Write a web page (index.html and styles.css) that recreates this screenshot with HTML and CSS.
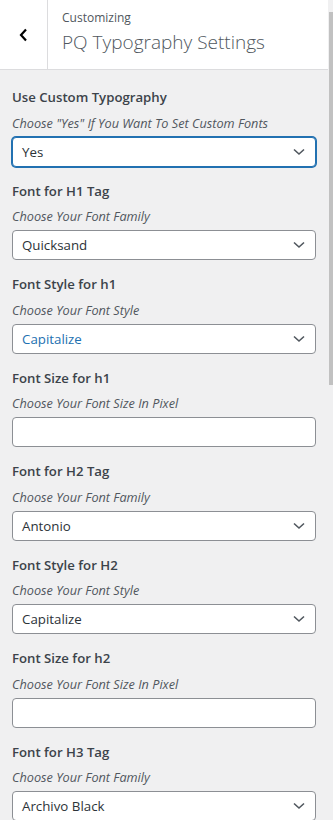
FILE: index.html
```html
<!DOCTYPE html>
<html lang="en">
    <head>
        <meta charset="UTF-8">
        <title>PQ Typography Settings</title>
        <link rel="stylesheet" href="styles.css">
    </head>
    <body>
    <div class="frame">
        <div class="pane">
            <div class="pane-head">
                <div class="back">
                    <svg width="10" height="14" viewBox="0 0 10 14"><polyline points="7,1.5 2,7 7,12.5" fill="none" stroke="#000" stroke-width="2.2"/></svg>
                </div>
                <div class="head-text">
                    <div class="head-sub">Customizing</div>
                    <div class="head-title">PQ Typography Settings</div>
                </div>
            </div>
            <div class="controls">
                <div class="control">
                    <span class="control-title">Use Custom Typography</span>
                    <span class="control-desc">Choose "Yes" If You Want To Set Custom Fonts</span>
                    <div class="select focus"><span>Yes</span><svg class="chev" width="12" height="8" viewBox="0 0 12 8"><polyline points="1,1.5 6,6 11,1.5" fill="none" stroke="#50575e" stroke-width="1.6"/></svg></div>
                </div>
                <div class="control">
                    <span class="control-title">Font for H1 Tag</span>
                    <span class="control-desc">Choose Your Font Family</span>
                    <div class="select"><span>Quicksand</span><svg class="chev" width="12" height="8" viewBox="0 0 12 8"><polyline points="1,1.5 6,6 11,1.5" fill="none" stroke="#50575e" stroke-width="1.6"/></svg></div>
                </div>
                <div class="control">
                    <span class="control-title">Font Style for h1</span>
                    <span class="control-desc">Choose Your Font Style</span>
                    <div class="select hover"><span>Capitalize</span><svg class="chev" width="12" height="8" viewBox="0 0 12 8"><polyline points="1,1.5 6,6 11,1.5" fill="none" stroke="#50575e" stroke-width="1.6"/></svg></div>
                </div>
                <div class="control">
                    <span class="control-title">Font Size for h1</span>
                    <span class="control-desc">Choose Your Font Size In Pixel</span>
                    <div class="input"></div>
                </div>
                <div class="control">
                    <span class="control-title">Font for H2 Tag</span>
                    <span class="control-desc">Choose Your Font Family</span>
                    <div class="select"><span>Antonio</span><svg class="chev" width="12" height="8" viewBox="0 0 12 8"><polyline points="1,1.5 6,6 11,1.5" fill="none" stroke="#50575e" stroke-width="1.6"/></svg></div>
                </div>
                <div class="control">
                    <span class="control-title">Font Style for H2</span>
                    <span class="control-desc">Choose Your Font Style</span>
                    <div class="select"><span>Capitalize</span><svg class="chev" width="12" height="8" viewBox="0 0 12 8"><polyline points="1,1.5 6,6 11,1.5" fill="none" stroke="#50575e" stroke-width="1.6"/></svg></div>
                </div>
                <div class="control">
                    <span class="control-title">Font Size for h2</span>
                    <span class="control-desc">Choose Your Font Size In Pixel</span>
                    <div class="input"></div>
                </div>
                <div class="control">
                    <span class="control-title">Font for H3 Tag</span>
                    <span class="control-desc">Choose Your Font Family</span>
                    <div class="select"><span>Archivo Black</span><svg class="chev" width="12" height="8" viewBox="0 0 12 8"><polyline points="1,1.5 6,6 11,1.5" fill="none" stroke="#50575e" stroke-width="1.6"/></svg></div>
                </div>
            </div>
        </div>
        <div class="scrollbar">
            <div class="thumb"></div>
        </div>
    </div>
    </body>
</html>
```

FILE: styles.css
```css
body {
    margin: 0;
    overflow: hidden;
    background-color: #f0f0f1;
    font-family: "Open Sans", "Noto Sans", sans-serif;
    color: #3c434a;
}
.frame {
    display: flex;
    height: 820px;
    overflow: hidden;
}
.pane {
    flex: 1;
    min-width: 0;
}
.pane-head {
    display: flex;
    height: 69px;
    background-color: #fff;
    border-bottom: 1px solid #dcdcde;
}
.back {
    width: 47px;
    border-right: 1px solid #dcdcde;
    display: flex;
    justify-content: center;
    align-items: center;
}
.head-text {
    padding: 9px 0 0 14px;
    color: #50575e;
}
.head-sub {
    font-size: 12px;
    line-height: 18px;
}
.head-title {
    font-size: 19px;
    font-weight: 300;
    line-height: 30px;
}

.controls {
    padding: 15px 12px 0 12px;
}
.control {
    margin-bottom: 12px;
}
.control-title {
    display: block;
    font-size: 13.2px;
    font-weight: 600;
    line-height: 24.5px;
    margin-bottom: 4px;
    color: #3c434a;
}
.control-desc {
    display: block;
    font-size: 12.7px;
    font-style: italic;
    line-height: 18px;
    margin-bottom: 5px;
    color: #50575e;
}
.select,
.input {
    box-sizing: border-box;
    height: 30px;
    background-color: #fff;
    border: 1px solid #8c8f94;
    border-radius: 4px;
}
.select {
    display: flex;
    justify-content: space-between;
    align-items: center;
    padding: 0 10px 0 9px;
    font-size: 13.3px;
    color: #2c3338;
}
.select.focus {
    border-color: #2271b1;
    box-shadow: 0 0 0 1px #2271b1;
}
.select.hover {
    color: #2271b1;
}
.chev {
    display: block;
}

.scrollbar {
    width: 5px;
    background-color: #f0f0f1;
    padding-top: 12px;
}
.thumb {
    margin-left: 1px;
    height: 373px;
    background-color: #c1c1c1;
}
```
